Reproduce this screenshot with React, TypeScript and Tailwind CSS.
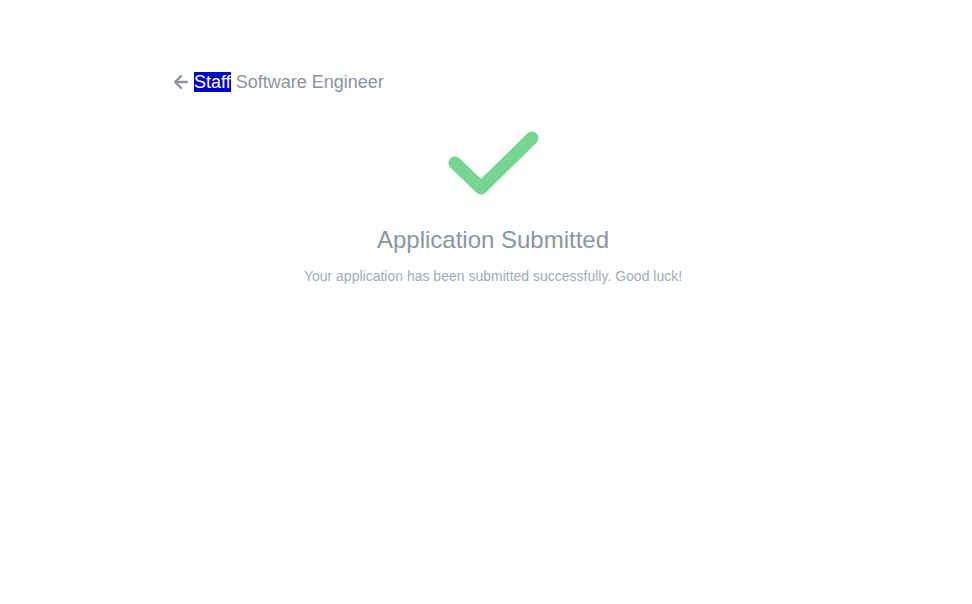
import { ArrowLeft } from "lucide-react";

function CheckMark() {
  return (
    <svg width="100" height="76" viewBox="0 0 100 76" fill="none">
      <path
        d="M12 34 L38 59 L89 9"
        stroke="#77d593"
        strokeWidth="13"
        strokeLinecap="round"
        strokeLinejoin="round"
      />
    </svg>
  );
}

export default function App() {
  return (
    <div className="min-h-screen bg-white font-['Liberation_Sans',Arial,sans-serif]">
      <div className="ml-[172px] w-[642px] pt-[70px]">
        <div className="flex items-center gap-[3px] -ml-px text-[18px] text-[#8a949e] leading-[24px]">
          <ArrowLeft size={20} strokeWidth={2.75} className="text-[#8a949e]" />
          <span>
            <span className="bg-[#0000cc] text-white">Staff</span> Software Engineer
          </span>
        </div>
        <div className="flex flex-col items-center mt-[35px]">
          <CheckMark />
          <h1 className="mt-[20px] text-[24px] leading-[30px] text-[#8a96a3]">
            Application Submitted
          </h1>
          <p className="mt-[12px] text-[14px] leading-[18px] text-[#a3acb5]">
            Your application has been submitted successfully. Good luck!
          </p>
        </div>
      </div>
    </div>
  );
}
